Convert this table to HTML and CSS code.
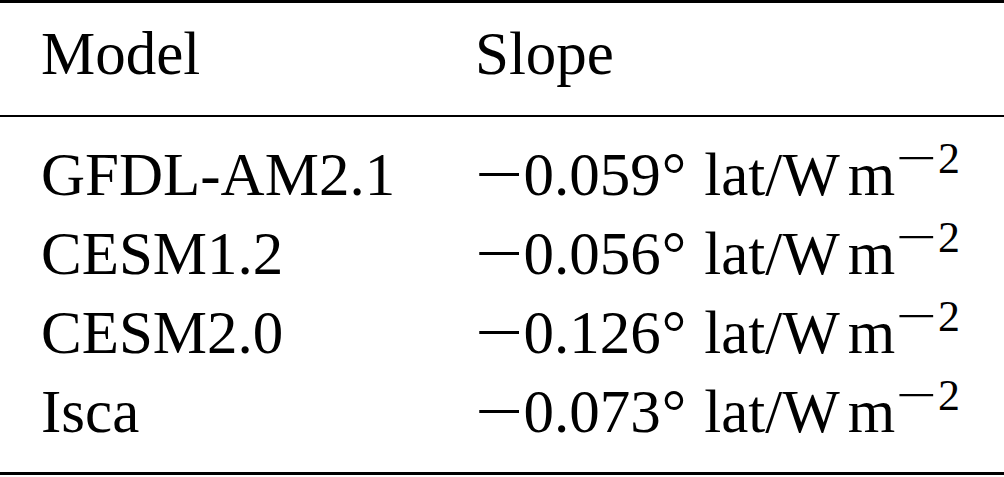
FILE: index.html
```html
<!DOCTYPE html>
<html>
<head>
  <meta charset="UTF-8">
  <title>Model slopes</title>
  <link rel="stylesheet" href="styles.css">
</head>
<body>
  <table class="slopes">
    <thead>
      <tr>
        <th class="model">Model</th>
        <th class="slope">Slope</th>
      </tr>
    </thead>
    <tbody>
      <tr>
        <td class="model">GFDL-AM2.1</td>
        <td class="slope"><span class="minus">&minus;</span>0.059<span class="deg">&deg;</span> lat/W<span class="thin"></span>m<span class="sup"><span class="minus">&minus;</span>2</span></td>
      </tr>
      <tr>
        <td class="model">CESM1.2</td>
        <td class="slope"><span class="minus">&minus;</span>0.056<span class="deg">&deg;</span> lat/W<span class="thin"></span>m<span class="sup"><span class="minus">&minus;</span>2</span></td>
      </tr>
      <tr>
        <td class="model">CESM2.0</td>
        <td class="slope"><span class="minus">&minus;</span>0.126<span class="deg">&deg;</span> lat/W<span class="thin"></span>m<span class="sup"><span class="minus">&minus;</span>2</span></td>
      </tr>
      <tr>
        <td class="model">Isca</td>
        <td class="slope"><span class="minus">&minus;</span>0.073<span class="deg">&deg;</span> lat/W<span class="thin"></span>m<span class="sup"><span class="minus">&minus;</span>2</span></td>
      </tr>
    </tbody>
  </table>
</body>
</html>
```

FILE: styles.css
```css
:root {
  font: 61px/79px "Liberation Serif", "Times New Roman", serif;
  color: #000;
  background: #fff;
}

body {
  margin: 0;
}

.slopes {
  width: 1004px;
  border-collapse: separate;
  border-spacing: 0;
}

  .slopes th,
  .slopes td {
    padding: 0;
    text-align: left;
    font-weight: 400;
    white-space: nowrap;
  }

  .slopes thead th {
    padding-top: 11px;
    padding-bottom: 22px;
    border-top: 3px solid #000;
    border-bottom: 2px solid #000;
  }

  .slopes tbody tr:first-child td {
    padding-top: 18px;
  }

  .slopes tbody tr:last-child td {
    padding-bottom: 21px;
    border-bottom: 3px solid #000;
  }

  .slopes .model {
    width: 434px;
    padding-left: 41px;
  }

.minus {
  display: inline-block;
  margin-right: 14px;
  transform: scaleX(1.4);
  transform-origin: left center;
}

.deg {
  margin-left: 1px;
  margin-right: 3px;
}

.thin {
  display: inline-block;
  width: 8px;
}

.sup {
  margin-left: 1px;
  font-size: 0.72em;
  line-height: 0;
  vertical-align: 22px;
}

  .sup .minus {
    margin-right: 17px;
    transform: scaleX(1.65);
  }
```
